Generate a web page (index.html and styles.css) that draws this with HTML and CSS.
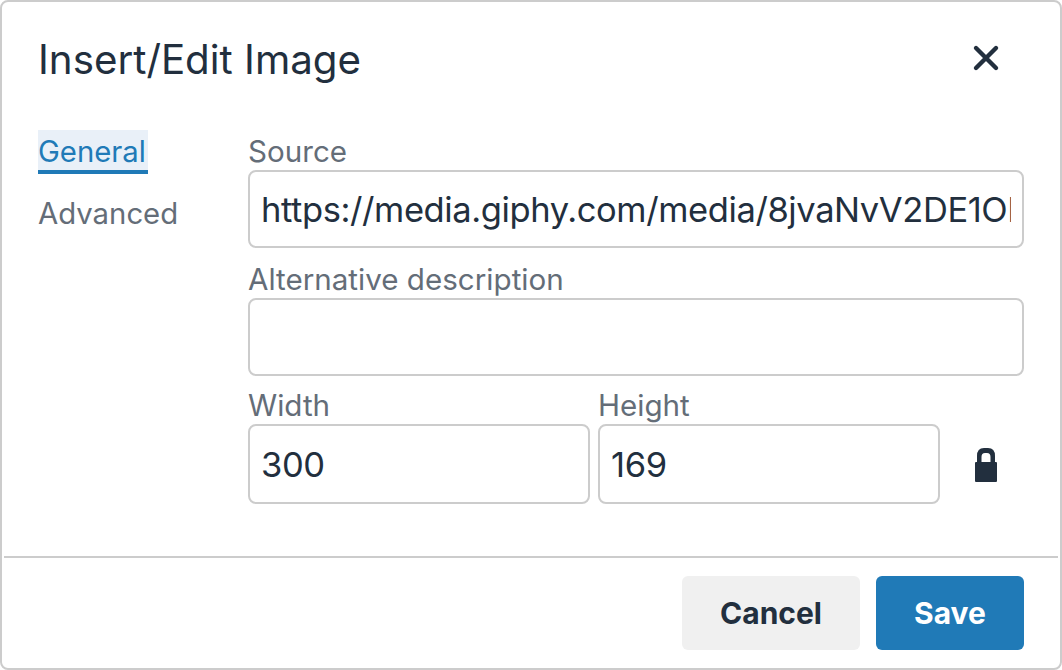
FILE: index.html
```html
<!DOCTYPE html>
<html lang="en">
<head>
  <meta charset="UTF-8" />
  <title>Insert/Edit Image</title>
  <link rel="stylesheet" href="styles.css">
</head>
<body>
  <div class="dialog">
    <div class="dialog-header">
      <div class="dialog-title">Insert/Edit Image</div>
      <svg class="close-icon" width="48" height="48" viewBox="0 0 48 48">
        <path d="M14 14 L34 34 M34 14 L14 34" stroke="#222f3e" stroke-width="4.4" stroke-linecap="round" fill="none"/>
      </svg>
    </div>

    <div class="dialog-body">
      <div class="tabs">
        <div class="tab active">General</div>
        <div class="tab">Advanced</div>
      </div>

      <div class="form">
        <div class="field">
          <label>Source</label>
          <input class="input" type="text" value="https://media.giphy.com/media/8jvaNvV2DE1OMGi5hS/giphy.gif">
        </div>
        <div class="field field-alt">
          <label>Alternative description</label>
          <input class="input" type="text">
        </div>
        <div class="size-row">
          <div class="size-field">
            <label>Width</label>
            <input class="input" type="text" value="300">
          </div>
          <div class="size-field">
            <label>Height</label>
            <input class="input" type="text" value="169">
          </div>
          <svg class="lock-icon" width="22" height="34" viewBox="0 0 22 34">
            <path fill="#222f3e" d="M2 14 V8 Q2 0 9 0 H13 Q20 0 20 8 V14 H21 Q22 14 22 15 V33 Q22 34 21 34 H1 Q0 34 0 33 V15 Q0 14 1 14 Z M6.500 14 H15.500 V9 Q15.500 5 12 5 H10 Q6.500 5 6.500 9 Z"/>
          </svg>
        </div>
      </div>
    </div>

    <div class="dialog-footer">
      <button class="btn btn-secondary">Cancel</button>
      <button class="btn btn-primary">Save</button>
    </div>
  </div>
</body>
</html>
```

FILE: styles.css
```css
* { box-sizing: border-box; }

html, body {
  margin: 0;
  padding: 0;
  background: white;
}

body {
  font-family: Inter, 'Noto Sans', sans-serif;
  color: #222f3e;
}

.dialog {
  width: 1062px;
  height: 670px;
  border: 2px solid #ccc;
  border-radius: 8px;
  padding: 0 2px 0 2px;
  background: white;
  display: flex;
  flex-direction: column;
}

.dialog-header {
  height: 112px;
  padding: 0 48px 0 34px;
  display: flex;
  justify-content: space-between;
  align-items: center;
}

.dialog-title {
  font-size: 40.300px;
  line-height: 52px;
  margin-top: 4px;
}

.dialog-body {
  flex: 1;
  display: flex;
  padding: 16px 34px 0 34px;
}

.tabs {
  width: 210px;
  flex-shrink: 0;
}

.tab {
  width: fit-content;
  font-size: 29.300px;
  line-height: 44px;
  color: #646d78;
  padding: 0 2px 0 0;
  height: 44px;
  margin-bottom: 18px;
}

.tab.active {
  color: #207ab7;
  background: #e9f0f8;
  border-bottom: 4px solid #207ab7;
}

.form {
  flex: 1;
}

label {
  display: block;
  font-size: 29.600px;
  height: 40px;
  line-height: 42px;
  color: #646d78;
}

.input {
  display: block;
  width: 100%;
  height: 78px;
  border: 2px solid #ccc;
  border-radius: 8px;
  padding: 0 11px;
  font-family: inherit;
  font-size: 34.500px;
  letter-spacing: -0.400px;
  color: #222f3e;
  background: white;
  outline: none;
}

.field {
  margin-bottom: 10px;
}

.field-alt {
  margin-bottom: 8px;
}

.size-row {
  display: flex;
  align-items: flex-end;
  gap: 8px;
}

.size-field {
  width: 342px;
}

.size-field .input {
  height: 80px;
}

.lock-icon {
  margin: 0 0 22px 27px;
}

.dialog-footer {
  height: 112px;
  border-top: 2px solid #ccc;
  padding: 18px 34px 0 0;
  display: flex;
  justify-content: flex-end;
  gap: 16px;
}

.btn {
  height: 74px;
  border: 0;
  border-radius: 6px;
  font-family: inherit;
  font-size: 30px;
  font-weight: 700;
}

.btn-secondary {
  width: 178px;
  background: #f0f0f0;
  color: #222f3e;
}

.btn-primary {
  width: 148px;
  background: #207ab7;
  color: white;
}
```
